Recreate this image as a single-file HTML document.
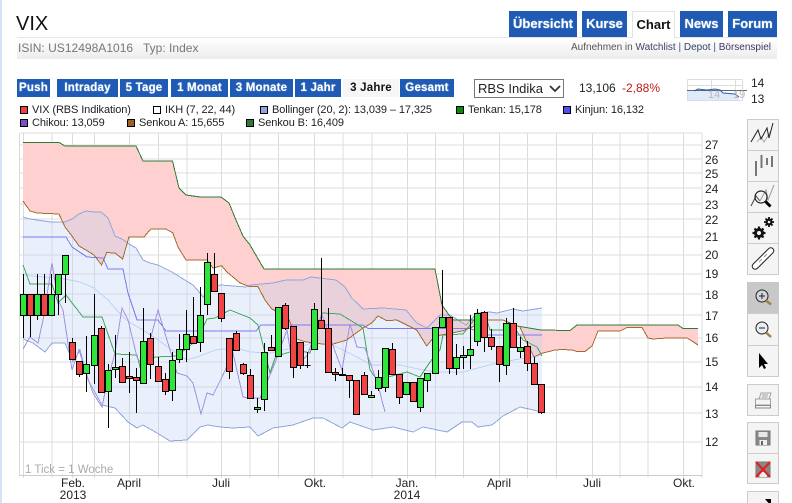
<!DOCTYPE html>
<html><head><meta charset="utf-8"><style>
html,body{margin:0;padding:0;background:#fff;width:792px;height:503px;overflow:hidden}
body{position:relative;font-family:"Liberation Sans",sans-serif;color:#222}
.a{position:absolute;white-space:nowrap}
.nav{position:absolute;top:11px;height:26px;line-height:25px;background:#1f5bb5;color:#fff;font-weight:bold;font-size:13px;text-align:center;text-shadow:0 0 1px #cde}
.per{position:absolute;top:79px;height:18px;line-height:18px;background:#1f5bb5;color:#fff;font-weight:bold;font-size:11.5px;text-align:center;letter-spacing:.2px;text-shadow:0 0 1px #cde}
.leg{position:absolute;font-size:11px;line-height:13px;color:#222;white-space:nowrap;letter-spacing:-.1px}
.sw{position:absolute;width:6px;height:6px;border:1px solid #000}
.tb{position:absolute;left:747px;width:32px;box-sizing:border-box;background:#f4f4f4;border:1px solid #ccc}
.sep{position:absolute;left:747px;width:32px;height:1px;background:#ccc}
</style></head><body>
<div class="a" style="left:0;top:0;width:2px;height:503px;background:#d5e2fa"></div>
<div class="a" style="left:16px;top:12px;font-size:20px;line-height:24px;color:#111">VIX</div>
<div class="a" style="left:17px;top:37px;width:760px;height:22px;background:linear-gradient(#fff,#ececec);border-top:1px solid #e6e6e6;box-sizing:border-box"></div>
<div class="a" style="left:18px;top:40px;font-size:12px;line-height:16px;color:#777;letter-spacing:.02px">ISIN: US12498A1016 &nbsp; Typ: Index</div>
<div class="a" style="left:571px;top:41px;font-size:10px;line-height:14px;color:#555">Aufnehmen in <span style="color:#446">Watchlist</span> <span style="color:#35a">|</span> <span style="color:#346">Depot</span> <span style="color:#35a">|</span> <span style="color:#436">Börsenspiel</span></div>
<div class="nav" style="left:509px;width:68px">Übersicht</div>
<div class="nav" style="left:582px;width:45px">Kurse</div>
<div class="a" style="left:632px;top:11px;width:43px;height:27px;box-sizing:border-box;background:#fff;border:1px solid #e4e4e4;border-bottom:0;text-align:center;font-weight:bold;font-size:13px;line-height:26px;color:#111">Chart</div>
<div class="nav" style="left:680px;width:43px">News</div>
<div class="nav" style="left:728px;width:49px">Forum</div>

<div class="per" style="left:17px;width:33px">Push</div>
<div class="per" style="left:57px;width:61px">Intraday</div>
<div class="per" style="left:120px;width:48px">5 Tage</div>
<div class="per" style="left:171px;width:57px">1 Monat</div>
<div class="per" style="left:230px;width:63px">3 Monate</div>
<div class="per" style="left:295px;width:46px">1 Jahr</div>
<div class="per" style="left:343px;width:56px;background:#f6f6f6;color:#111;text-shadow:none">3 Jahre</div>
<div class="per" style="left:400px;width:54px">Gesamt</div>

<div class="a" style="left:474px;top:79px;width:90px;height:19px;box-sizing:border-box;border:1px solid #777;background:#fff;font-size:13px;line-height:17px;padding-left:3px;color:#222">RBS Indika
<svg style="position:absolute;left:74px;top:5px" width="12" height="8"><path d="M1 1l5 5 5-5" fill="none" stroke="#333" stroke-width="1.8"/></svg></div>
<div class="a" style="left:579px;top:80px;font-size:12px;line-height:16px;color:#222">13,106</div>
<div class="a" style="left:622px;top:80px;font-size:12px;line-height:16px;color:#c21a1a">-2,88%</div>

<svg class="a" style="left:687px;top:79px" width="62" height="23">
<g fill="none" stroke="#ddd"><path d="M.5 .5H55M.5 21.500H55M.5 .5V22M24.500 .5V22M48.500 .5V22M55.500 .5V22M.5 6.500H55"/></g>
<path d="M7 12L11 10 20 11 28 10 33 11 36 14 48 15 52 18V21H1V12z" fill="#dfeafb"/>
<path d="M0 11.500H60" stroke="#666" fill="none"/>
<path d="M7 12L11 10 20 11 28 10 33 11 36 14 48 15 52 18" stroke="#2460b8" fill="none"/>
<text x="21" y="19" font-size="11" fill="#bbb" font-family="Liberation Sans">14</text>
<text x="46" y="19" font-size="11" fill="#bbb" font-family="Liberation Sans">19</text>
</svg>
<div class="a" style="left:751px;top:76px;font-size:12px;line-height:15px">14</div>
<div class="a" style="left:751px;top:92px;font-size:12px;line-height:15px">13</div>

<div class="sw" style="left:20px;top:106px;background:#f04040"></div><div class="leg" style="left:32px;top:104px">VIX (RBS Indikation)</div>
<div class="sw" style="left:153px;top:106px;background:#fff"></div><div class="leg" style="left:165px;top:104px">IKH (7, 22, 44)</div>
<div class="sw" style="left:260px;top:106px;background:#8fa8dc"></div><div class="leg" style="left:272px;top:104px">Bollinger (20, 2): 13,039 – 17,325</div>
<div class="sw" style="left:456px;top:106px;background:#0a8a0a"></div><div class="leg" style="left:468px;top:104px">Tenkan: 15,178</div>
<div class="sw" style="left:563px;top:106px;background:#5050f0"></div><div class="leg" style="left:575px;top:104px">Kinjun: 16,132</div>
<div class="sw" style="left:20px;top:119px;background:#7a50c8"></div><div class="leg" style="left:32px;top:117px">Chikou: 13,059</div>
<div class="sw" style="left:127px;top:119px;background:#a06020"></div><div class="leg" style="left:139px;top:117px">Senkou A: 15,655</div>
<div class="sw" style="left:246px;top:119px;background:#2f7a35"></div><div class="leg" style="left:258px;top:117px">Senkou B: 16,409</div>

<svg class="a" style="left:0;top:0" width="792" height="503">
<g fill="none" stroke="#dcdcdc" stroke-width="1" shape-rendering="crispEdges">
<path d="M20 133H702"/>
<path d="M20 145H702M20 159H702M20 173H702M20 188H702M20 204H702M20 219H702M20 237H702M20 255H702M20 274H702M20 294H702M20 315H702M20 338H702M20 362H702M20 387H702M20 413H702M20 442H702" stroke-width="1"/>
<path d="M19.500 133V475M23.500 133V478M52 133V478M72.500 133V478M94.500 133V478M129.500 133V478M158.500 133V478M187 133V478M221.500 133V478M250 133V478M278.500 133V478M314.500 133V478M343 133V478M372 133V478M407.500 133V478M435.500 133V478M463.500 133V478M499.500 133V478M527.500 133V478M556.500 133V478M592.500 133V478M620 133V478M648 133V478M683.500 133V478M702 133V478"/>
<path d="M19 475.500H702" stroke="#ccc"/>
</g>
<polygon fill="#ffd0d0" points="23,142.500 59,142.500 65,146 136,146 143,161 172.500,161 179,188 186,195 200,197 221,197 229,203 236,220 243,236 250,245 264,269 435,269 442,305 449,315 453,320 488,320 488,320 470,328 462,331 441,335 433,338 426,346 416.700,330 406.700,325 396.700,320 386.700,320.700 378,316 371.700,323 363,328 346.700,340 330,345 305,341.700 296.700,339 288,317 271.700,309 265,300 258,286.700 250,286.700 240,283 226.700,271.700 221.700,265.700 213,268 207,260 186,260 178,247 172.700,232.700 165.700,229 150.700,229 144,237 129,237 122.600,259 115,253 106.600,252.600 101.600,265 94,255 86,250 79,246 72,236 65,227 59,214 37,213 30,211 23,201"/>
<polygon fill="#cbead9" points="488,320 503,320 517,326 541,330 541,353.500 534,357 527,343 520,327 503,320"/>
<polygon fill="#ffd0d0" points="520,327 517,326 530,329 541,330 570,330.500 577,325 678,325 683,328.500 698,328.500 698,345 692,341 687,338 667,338 653,339 648,338 642,327.500 627,327.500 620,331 598,331 592,346 585,351.500 577,351.500 572,350 562,349.500 555,350 541,353.500 534,357 527,343"/>
<polygon fill="rgba(192,212,244,.35)" points="23,217 30,219 44,221 51,222 65,222 72,219 79,214 86,211 94,212 101,212 108,218 115,236 122,239 129,244 136,248 143,260 150,263 158,265 172,272 180,277 193,285 200,293 203,297 210,287 221,285 246,287 250,285 273,283 286,280 303,280 311,277 336,280 345,287 351.700,298 363,309 383,308 406,310 416.700,323 427,328 440,315 450,315 466,325 477,313 490,312 497,313 513,309 523,311 542,308 542,412 520,407 503,416 492,425 478,427 472,422 462,422 447,432 423,427 413,432 393,427 373,430 350,422 342,428 323,418 313,418 293,425 273,428 258,436 250,427 233,428 220,427 208,425 200,427 187,440 170,441 157,433 143,425 137,428 128,422 115,408 102,405 88,380 80,350 73,362 65,343 52,343 45,352 33,343 23,339"/>
<g fill="none" shape-rendering="crispEdges">
<polyline stroke="#bcd2f6" points="23,274 30,276 45,277 65,279 80,282 94,288 108,300 122,316 129,322 143,330 158,340 172,350 187,360 200,356 215,350 222,349 240,349 250,352 270,353 283,350 300,347 320,340 333,345 353,355 372,365 400,365 423,370 437,372 463,372 497,363 525,358 542,355"/>
<polyline stroke="#8fa6dc" points="23,217 30,219 44,221 51,222 65,222 72,219 79,214 86,211 94,212 101,212 108,218 115,236 122,239 129,244 136,248 143,260 150,263 158,265 172,272 180,277 193,285 200,293 203,297 210,287 221,285 246,287 250,285 273,283 286,280 303,280 311,277 336,280 345,287 351.700,298 363,309 383,308 406,310 416.700,323 427,328 440,315 450,315 466,325 477,313 490,312 497,313 513,309 523,311 542,308"/>
<polyline stroke="#8fa6dc" points="23,339 33,343 45,352 52,343 65,343 73,362 80,350 88,380 102,405 115,408 128,422 137,428 143,425 157,433 170,441 187,440 200,427 208,425 220,427 233,428 250,427 258,436 273,428 293,425 313,418 323,418 342,428 350,422 373,430 393,427 413,432 423,427 447,432 462,422 472,422 478,427 492,425 503,416 520,407 542,412"/>
<polyline stroke="#7c7cf0" points="23,237 66,237 72,247 87,257 103,258 108,269 123,269 128,293 137,320 158,320 166,331 250,331 256,331 261,325 363,325 368,328.500 470,328.500 485,335 542,335"/>
<polyline stroke="#44a860" points="23,265 30,284 52,284 58,303 66,295 83,317 102,317 115,354 137,355 140,367 155,357 177,356 197,340 207,319 215,318 230,310 250,318 258,325 270,373 275,358 283,354 297,350 310,353 322,313 340,314 363,328 370,370 377,380 388,377 407,372 420,377 430,362 440,350 443,335 463,334 470,325 474,320 487,320 490,330 516,330 523,340 537,347 542,356"/>
<polyline stroke="#a48fe0" points="23,349 30,337 38,343 43,320 52,263 58,300 63,310 72,370 79,350 86,373 93,393 102,407 107,383 115,353 122,308 128,320 137,357 143,367 152,333 158,310 167,340 177,373 187,376 193,383 201,414 207,393 213,395 222,377 233,353 243,397 250,398 260,398 270,375 275,363 287,330 293,367 307,356 322,315 332,343 342,370 350,324 357,347 365,348 378,385 385,412"/>
<polyline stroke="#2f7a35" points="23,142.500 59,142.500 65,146 136,146 143,161 172.500,161 179,188 186,195 200,197 221,197 229,203 236,220 243,236 250,245 264,269 435,269 442,305 449,315 453,320 503,320 517,326 541,330 570,330.500 577,325 678,325 683,328.500 698,328.500"/>
<polyline stroke="#a66a2c" points="23,201 30,211 37,213 59,214 65,227 72,236 79,246 86,250 94,255 101.600,265 106.600,252.600 115,253 122.600,259 129,237 144,237 150.700,229 165.700,229 172.700,232.700 178,247 186,260 207,260 213,268 221.700,265.700 226.700,271.700 240,283 250,286.700 258,286.700 265,300 271.700,309 288,317 296.700,339 305,341.700 330,345 346.700,340 363,328 371.700,323 378,316 386.700,320.700 396.700,320 406.700,325 416.700,330 426.700,346 433,338 441,335 462,331 470,328 488,320 503,320 520,327 527,343 534,357 541,353.500 555,350 562,349.500 572,350 577,351.500 585,351.500 592,346 598,331 620,331 627,327.500 642,327.500 648,338 653,339 667,338 687,338 692,341 698,345"/>
</g>
<path stroke="#000" fill="none" shape-rendering="crispEdges" d="M23.500 274V338M30.500 294V337M37.500 274V320M44.500 274V315M51.500 274V315M58.500 274V315M65.500 255V303M72.500 338V359M79.500 361V377M86.500 336V392M94.500 294V384M101.500 326V392M108.500 364V428M115.500 335V378M122.500 358V382M129.500 352V393M136.500 368V413M143.500 308V383M150.500 333V379M158.500 357V381M165.500 373V395M172.500 352V401M179.500 334V363M186.500 310V362M193.500 297V343M200.500 287V352M207.500 253V315M214.500 253V292M221.500 293V322M229.500 338V379M236.500 331V350M243.500 363V375M250.500 369V398M257.500 398V413M264.500 343V411M271.500 335V350M278.500 307V356M285.500 303V330M293.500 326V378M300.500 342V369M307.500 352V368M314.500 303V349M321.500 258V328M328.500 308V372M335.500 368V381M342.500 368V375M349.500 375V398M356.500 380V414M364.500 372V394M371.500 391V397M378.500 370V391M385.500 348V392M392.500 343V374M399.500 374V404M406.500 382V394M413.500 382V401M420.500 378V412M427.500 373V392M435.500 327V373M442.500 270V327M449.500 317V374M456.500 344V375M463.500 346V369M470.500 315V369M477.500 309V346M484.500 311V352M491.500 329V350M499.500 346V382M506.500 318V375M513.500 308V347M520.500 337V358M527.500 341V371M534.500 357V384M541.500 384V414M304.500 365.500H310.500"/>
<path fill="#2ee63a" stroke="#000" shape-rendering="crispEdges" d="M20.500 294.500h6v21h-6zM34.500 294.500h6v21h-6zM48.500 294.500h6v21h-6zM55.500 274.500h6v20h-6zM62.500 255.500h6v19h-6zM83.500 364.500h6v9h-6zM91.500 335.500h6v30h-6zM105.500 370.500h6v21h-6zM112.500 367.500h6v2h-6zM140.500 341.500h6v42h-6zM169.500 360.500h6v30h-6zM176.500 349.500h6v10h-6zM183.500 334.500h6v15h-6zM197.500 315.500h6v27h-6zM204.500 262.500h6v42h-6zM254.500 407.500h6v2h-6zM261.500 352.500h6v47h-6zM275.500 307.500h6v49h-6zM311.500 309.500h6v40h-6zM368.500 395.500h6v2h-6zM375.500 377.500h6v11h-6zM382.500 348.500h6v39h-6zM403.500 382.500h6v12h-6zM417.500 378.500h6v29h-6zM424.500 373.500h6v7h-6zM432.500 327.500h6v46h-6zM439.500 317.500h6v10h-6zM453.500 357.500h6v11h-6zM460.500 355.500h6v2h-6zM467.500 349.500h6v6h-6zM474.500 313.500h6v28h-6zM503.500 323.500h6v42h-6zM517.500 347.500h6v4h-6z"/>
<path fill="#f24444" stroke="#000" shape-rendering="crispEdges" d="M27.500 294.500h6v21h-6zM41.500 294.500h6v21h-6zM69.500 342.500h6v17h-6zM76.500 361.500h6v13h-6zM98.500 328.500h6v64h-6zM119.500 366.500h6v16h-6zM126.500 376.500h6v2h-6zM133.500 377.500h6v3h-6zM147.500 338.500h6v26h-6zM155.500 366.500h6v15h-6zM162.500 379.500h6v12h-6zM190.500 336.500h6v7h-6zM211.500 274.500h6v17h-6zM218.500 293.500h6v25h-6zM226.500 338.500h6v33h-6zM233.500 333.500h6v17h-6zM240.500 364.500h6v9h-6zM247.500 375.500h6v23h-6zM268.500 347.500h6v3h-6zM282.500 305.500h6v23h-6zM290.500 326.500h6v41h-6zM297.500 342.500h6v23h-6zM318.500 320.500h6v8h-6zM325.500 328.500h6v44h-6zM332.500 372.500h6v2h-6zM339.500 374.500h6v1h-6zM346.500 375.500h6v5h-6zM353.500 380.500h6v34h-6zM361.500 375.500h6v19h-6zM389.500 349.500h6v25h-6zM396.500 374.500h6v23h-6zM410.500 382.500h6v19h-6zM446.500 317.500h6v51h-6zM481.500 312.500h6v25h-6zM488.500 337.500h6v9h-6zM496.500 346.500h6v18h-6zM510.500 323.500h6v24h-6zM524.500 346.500h6v17h-6zM531.500 363.500h6v21h-6zM538.500 384.500h6v28h-6z"/>
<g font-family="Liberation Sans" font-size="12" fill="#222">
<text x="705" y="149">27</text><text x="705" y="164">26</text><text x="705" y="178">25</text><text x="705" y="193">24</text><text x="705" y="209">23</text><text x="705" y="224">22</text><text x="705" y="241">21</text><text x="705" y="259">20</text><text x="705" y="278">19</text><text x="705" y="299">18</text><text x="705" y="320">17</text><text x="705" y="342">16</text><text x="705" y="366">15</text><text x="705" y="391">14</text><text x="705" y="418">13</text><text x="705" y="446">12</text>
<g text-anchor="middle"><text x="73" y="487">Feb.</text><text x="73" y="499">2013</text><text x="129" y="487">April</text><text x="221" y="487">Juli</text><text x="315" y="487">Okt.</text><text x="407" y="487">Jan.</text><text x="407" y="499">2014</text><text x="499" y="487">April</text><text x="592" y="487">Juli</text><text x="684" y="487">Okt.</text></g>
</g>
<text x="25" y="473" font-family="Liberation Sans" font-size="11.500" fill="#aaa">1 Tick = 1 Woche</text>
</svg>

<div class="tb" style="top:119px;height:156px"></div>
<div class="sep" style="top:150px"></div><div class="sep" style="top:181px"></div><div class="sep" style="top:212px"></div><div class="sep" style="top:243px"></div>
<div class="tb" style="top:282px;height:95px"></div>
<div class="a" style="left:747px;top:282px;width:32px;height:31px;background:#c8c8c8"></div>
<div class="sep" style="top:345px"></div><div class="sep" style="top:313px"></div>
<div class="tb" style="top:384px;height:32px"></div>
<div class="tb" style="top:422px;height:62px"></div><div class="sep" style="top:453px"></div>
<div class="tb" style="top:491px;height:20px"></div>

<svg class="a" style="left:747px;top:119px" width="32" height="384">
<!-- line chart -->
<path d="M10 23L14 18 17 23 24 12" fill="none" stroke="#aaa"/>
<path d="M4 23L11 11 14 20 20 9 22 19 26 4" fill="none" stroke="#222"/>
<!-- bars -->
<path d="M9 42V57M14.500 36V49M20 39V46M25 37V48" stroke="#777" stroke-width="2" fill="none"/>
<!-- analyse -->
<g transform="translate(0,62)"><path d="M4 25L9 15 13 20" fill="none" stroke="#444"/><path d="M13 20L19 9 21 19 27 4" fill="none" stroke="#999"/><circle cx="14" cy="16" r="6" fill="none" stroke="#222" stroke-width="1.200"/><path d="M18.500 20.500l5 5" stroke="#000" stroke-width="3"/></g>
<!-- gears -->
<g transform="translate(0,93)" fill="#111"><circle cx="12" cy="21" r="5"/><path d="M12 14.500v13M5.500 21h13M7.500 16.500l9 9M16.500 16.500l-9 9" stroke="#111" stroke-width="2.200"/><circle cx="12" cy="21" r="2" fill="#f4f4f4"/><circle cx="22" cy="10" r="3.500"/><path d="M22 5v10M17 10h10M18.500 6.500l7 7M25.500 6.500l-7 7" stroke="#111" stroke-width="1.800"/><circle cx="22" cy="10" r="1.300" fill="#f4f4f4"/></g>
<!-- link -->
<g transform="translate(0,124)" fill="none" stroke="#222"><rect x="2" y="12.500" width="28" height="6" rx="3" transform="rotate(-45 16 15.500)" fill="#fff"/><path d="M12 19l3-3M17 14l3-3" stroke="#999"/></g>
<!-- zoom in -->
<g transform="translate(0,163)"><circle cx="15" cy="14" r="6" fill="#d4d8dc" stroke="#222"/><path d="M12 14h6M15 11v6" stroke="#222"/><path d="M19 18.500l5 4" stroke="#a08050" stroke-width="2.500"/></g>
<!-- zoom out -->
<g transform="translate(0,195)"><circle cx="15" cy="14" r="6" fill="#e8eef2" stroke="#222"/><path d="M12 14h6" stroke="#222"/><path d="M19 18.500l5 4.500" stroke="#a08050" stroke-width="2.500"/></g>
<!-- arrow -->
<path d="M12 234V249L15 246 17 250 19 249 17 245 21 245z" fill="#000"/>
<!-- print -->
<g transform="translate(0,265)" fill="none" stroke="#a0a0a0"><path d="M12 15L14 9H24L22 15" fill="#f4f4f4"/><path d="M15 11h6M14.500 13h6"/><path d="M8.500 15H23.500V21H8.500z"/><path d="M8.500 21.500H23.500V24H8.500z" stroke="#888"/></g>
<!-- save -->
<g transform="translate(0,303)"><path d="M9 9H23V23H9z" fill="#888" stroke="#777"/><path d="M11.500 10H20.500V15H11.500z" fill="#e8e8e8"/><path d="M12.500 18H20V23H12.500z" fill="#eee"/><path d="M14 19h2v4h-2z" fill="#666"/></g>
<!-- delete -->
<g transform="translate(0,334)"><path d="M9 9H23V24H9z" fill="#888" stroke="#777"/><path d="M12.500 19H20V24H12.500z" fill="#eee"/><path d="M9 9L23 24M23 9L9 24" stroke="#e02020" stroke-width="2.200"/></g>
<path d="M18 380H24V387z" fill="#000"/>
</svg>
</body></html>
